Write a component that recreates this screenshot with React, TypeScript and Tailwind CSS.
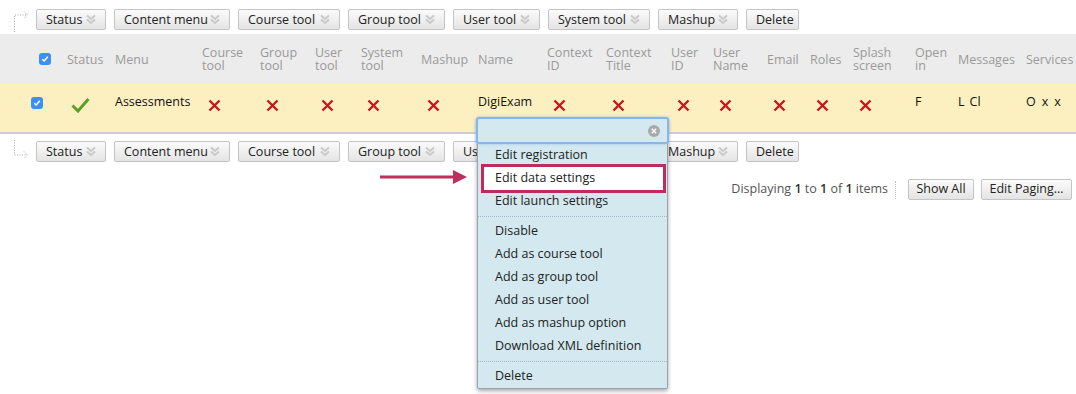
import React from "react";

const columns = [
  { key: "status", label: ["Status"], w: 48 },
  { key: "menu", label: ["Menu"], w: 87 },
  { key: "course", label: ["Course", "tool"], w: 58 },
  { key: "group", label: ["Group", "tool"], w: 55 },
  { key: "user", label: ["User", "tool"], w: 46 },
  { key: "system", label: ["System", "tool"], w: 60 },
  { key: "mashup", label: ["Mashup"], w: 57 },
  { key: "name", label: ["Name"], w: 69 },
  { key: "ctxid", label: ["Context", "ID"], w: 59 },
  { key: "ctxtitle", label: ["Context", "Title"], w: 65 },
  { key: "userid", label: ["User", "ID"], w: 42 },
  { key: "username", label: ["User", "Name"], w: 54 },
  { key: "email", label: ["Email"], w: 43 },
  { key: "roles", label: ["Roles"], w: 43 },
  { key: "splash", label: ["Splash", "screen"], w: 62 },
  { key: "openin", label: ["Open", "in"], w: 43 },
  { key: "messages", label: ["Messages"], w: 68 },
  { key: "services", label: ["Services"], w: 55 },
];

const crossCols = ["course", "group", "user", "system", "mashup", "ctxid", "ctxtitle", "userid", "username", "email", "roles", "splash"];

const toolbarButtons = [
  { label: "Status", w: 70, menu: true },
  { label: "Content menu", w: 116, menu: true },
  { label: "Course tool", w: 102, menu: true },
  { label: "Group tool", w: 97, menu: true },
  { label: "User tool", w: 87, menu: true },
  { label: "System tool", w: 102, menu: true },
  { label: "Mashup", w: 80, menu: true },
  { label: "Delete", w: 53, menu: false },
];

const menuItems = [
  ["Edit registration", "Edit data settings", "Edit launch settings"],
  [
    "Disable",
    "Add as course tool",
    "Add as group tool",
    "Add as user tool",
    "Add as mashup option",
    "Download XML definition",
  ],
  ["Delete"],
];

const Chevrons = () => (
  <svg width="10" height="11" viewBox="0 0 10 11" fill="none" className="shrink-0">
    <path d="M1 1.5 L5 5 L9 1.5" stroke="#c9c9c9" strokeWidth="2" />
    <path d="M1 5.5 L5 9 L9 5.5" stroke="#c9c9c9" strokeWidth="2" />
  </svg>
);

const RedX = () => (
  <svg width="13" height="13" viewBox="0 0 13 13">
    <path d="M1.5 1.5 L11.5 11.5 M11.5 1.5 L1.5 11.5" stroke="#c8161d" strokeWidth="2.4" />
  </svg>
);

const Checkbox = () => (
  <div className="w-[12px] h-[12px] rounded-[3px] bg-[#3d8ff2] flex items-center justify-center">
    <svg width="8" height="8" viewBox="0 0 8 8">
      <path d="M1.3 4.2 L3.2 6 L6.8 1.8" stroke="white" strokeWidth="1.5" fill="none" />
    </svg>
  </div>
);

const DottedArrow = ({ down }: { down?: boolean }) => (
  <svg width="20" height="24" viewBox="0 0 20 24" fill="none">
    {down ? (
      <>
        <path d="M2.5 0 V15 H14" stroke="#aaa" strokeDasharray="1 1.5" />
        <path d="M12 11.5 L15.5 15 L12 18.5" stroke="#aaa" strokeDasharray="1 1" />
      </>
    ) : (
      <>
        <path d="M2.5 24 V7 H14" stroke="#aaa" strokeDasharray="1 1.5" />
        <path d="M12 3.5 L15.5 7 L12 10.5" stroke="#aaa" strokeDasharray="1 1" />
      </>
    )}
  </svg>
);

const Toolbar = ({ down }: { down?: boolean }) => (
  <div className="flex items-center h-[21px]">
    <div className="w-[36px] pl-[12px] flex items-center">
      <DottedArrow down={down} />
    </div>
    <div className="flex gap-[8px]">
      {toolbarButtons.map((b) => (
        <button
          key={b.label}
          style={{ width: b.w }}
          className="h-[21px] flex items-center justify-between whitespace-nowrap px-[9px] border border-[#c4c4c4] rounded-[2px] bg-gradient-to-b from-[#fbfbfb] to-[#e4e4e4] text-[12.5px] leading-[13px] text-[#222]"
        >
          <span>{b.label}</span>
          {b.menu && <Chevrons />}
        </button>
      ))}
    </div>
  </div>
);

const App = () => {
  return (
    <div className="relative w-[1076px] h-[394px] bg-white overflow-hidden font-['Open_Sans',sans-serif]">
      <div className="pt-[9px] pb-[4px]">
        <Toolbar />
      </div>

      {/* header */}
      <div className="flex h-[50px] bg-[#ececec] text-[12.5px] leading-[13px] text-[#9a9a9a] whitespace-nowrap">
        <div className="w-[62px] pl-[39px] flex items-center">
          <Checkbox />
        </div>
        {columns.map((c) => (
          <div key={c.key} style={{ width: c.w }} className="pl-[5px] flex flex-col justify-center shrink-0">
            {c.label.map((l) => (
              <span key={l}>{l}</span>
            ))}
          </div>
        ))}
      </div>

      {/* data row */}
      <div className="flex h-[50px] bg-[#fdf0c0] border-b-2 border-[#cfcfcf] text-[12.5px] text-[#111] whitespace-nowrap">
        <div className="w-[62px] pl-[31px] pt-[13px]">
          <Checkbox />
        </div>
        {columns.map((c) => (
          <div key={c.key} style={{ width: c.w }} className="pl-[5px] shrink-0">
            {c.key === "status" && (
              <div className="pt-[13px] pl-[4px]">
                <svg width="19" height="16" viewBox="0 0 19 16">
                  <path d="M1.5 8.5 L7 14 L17.5 2" stroke="#5b9e2a" strokeWidth="3" fill="none" />
                </svg>
              </div>
            )}
            {c.key === "menu" && <div className="pt-[9px]">Assessments</div>}
            {c.key === "name" && <div className="pt-[9px]">DigiExam</div>}
            {c.key === "openin" && <div className="pt-[9px]">F</div>}
            {c.key === "messages" && (
              <div className="pt-[9px] flex gap-[5px]">
                <span>L</span>
                <span>Cl</span>
              </div>
            )}
            {c.key === "services" && (
              <div className="pt-[9px] flex gap-[6px]">
                <span>O</span>
                <span>x</span>
                <span>x</span>
              </div>
            )}
            {crossCols.includes(c.key) && (
              <div className="pt-[15px] pl-[6px]">
                <RedX />
              </div>
            )}
          </div>
        ))}
      </div>

      <div className="pt-[7px]">
        <Toolbar down />
      </div>

      {/* paging */}
      <div className="flex justify-end items-center pr-[4px] mt-[17px] text-[12.5px]">
        <span className="text-[#555]">
          Displaying <b className="font-semibold text-[#333]">1</b> to <b className="font-semibold text-[#333]">1</b> of{" "}
          <b className="font-semibold text-[#333]">1</b> items
        </span>
        <div className="h-[18px] ml-[7px] mr-[12px] border-l border-dotted border-[#bbb]" />
        <button className="w-[66px] h-[21px] border border-[#c4c4c4] rounded-[2px] bg-gradient-to-b from-[#fbfbfb] to-[#e4e4e4] text-[#222]">
          Show All
        </button>
        <button className="ml-[7px] w-[91px] h-[21px] border border-[#c4c4c4] rounded-[2px] bg-gradient-to-b from-[#fbfbfb] to-[#e4e4e4] text-[#222]">
          Edit Paging…
        </button>
      </div>

      {/* annotation arrow */}
      <svg className="absolute left-[380px] top-[169px]" width="88" height="16" viewBox="0 0 88 16">
        <path d="M0 8 H76" stroke="#bf2f5c" strokeWidth="3" />
        <path d="M73 1 L87 8 L73 15 Z" fill="#bf2f5c" />
      </svg>

      {/* dropdown menu */}
      <div className="absolute left-[477px] top-[118px] w-[191px] h-[271px] bg-[#d3e9ef] border border-[#9aa4a8] rounded-[2px] shadow-[0_2px_4px_rgba(0,0,0,0.35)] text-[12.5px] text-[#222]">
        <div className="relative -mx-[2px] -mt-[2px] h-[27px] border-[2px] border-[#86b6ea] rounded-[3px] shadow-[0_0_3px_#9cc4ef] bg-[#d3e9ef]">
          <div className="absolute right-[7px] top-[6px] w-[12px] h-[12px] rounded-full bg-[#a9a9a9] flex items-center justify-center">
            <svg width="6" height="6" viewBox="0 0 6 6">
              <path d="M0.8 0.8 L5.2 5.2 M5.2 0.8 L0.8 5.2" stroke="white" strokeWidth="1.4" />
            </svg>
          </div>
        </div>
        {menuItems.map((group, gi) => (
          <div key={gi} className={gi > 0 ? "border-t border-dotted border-[#9fb8cc] mt-[3px] pt-[3px]" : ""}>
            {group.map((item) =>
              item === "Edit data settings" ? (
                <div
                  key={item}
                  className="ml-[3px] mr-[1px] -my-[3px] h-[29px] bg-white border-[3px] border-[#bd2d5c] pl-[11px] flex items-center"
                >
                  {item}
                </div>
              ) : (
                <div key={item} className="h-[23px] pl-[17px] flex items-center">
                  {item}
                </div>
              )
            )}
          </div>
        ))}
      </div>
    </div>
  );
};

export default App;
